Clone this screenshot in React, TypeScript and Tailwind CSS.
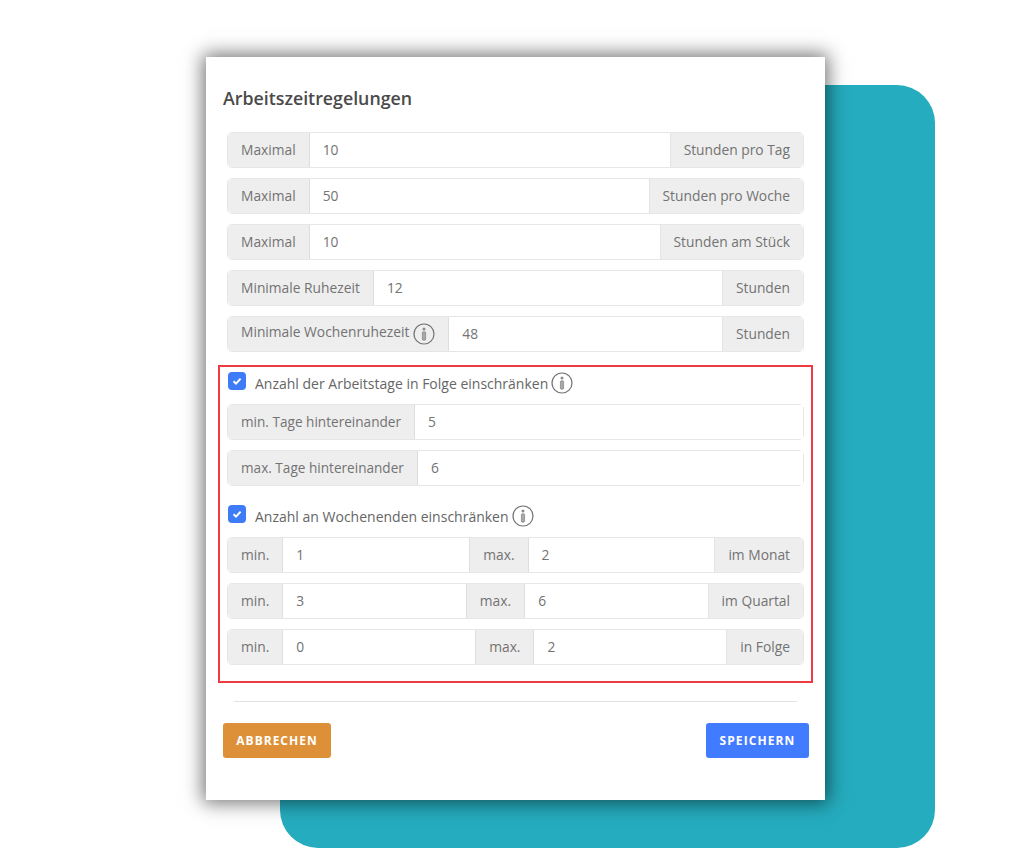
import React from 'react';

const InfoIcon = () => (
    <svg width="22" height="22" viewBox="0 0 22 22" fill="none" className="shrink-0">
        <circle cx="11" cy="11" r="10" stroke="#737373" strokeWidth="1.2" />
        <rect x="9.4" y="8.8" width="3.2" height="8.4" rx="1" fill="#a8a8a8" stroke="#737373" strokeWidth="0.6" />
        <circle cx="11" cy="5.9" r="1.5" fill="#8a8a8a" />
    </svg>
);

const Addon = ({ children, side }: { children: React.ReactNode; side: 'left' | 'mid' | 'right' }) => (
    <div
        className={
            'flex items-center gap-[4px] bg-[#eeeeee] px-[13px] text-[#737373] whitespace-nowrap ' +
            (side === 'left'
                ? 'rounded-l-[5px] border-r border-[#dedede]'
                : side === 'right'
                  ? 'rounded-r-[5px] border-l border-[#e4e4e4]'
                  : 'border-x border-[#dedede]')
        }
    >
        {children}
    </div>
);

const Field = ({ value }: { value: string }) => (
    <input
        readOnly
        value={value}
        className="min-w-0 flex-1 bg-white px-[13px] text-[#737373] outline-none"
    />
);

const Row = ({ children }: { children: React.ReactNode }) => (
    <div className="flex h-[36px] rounded-[5px] border border-[#e6e6e6] bg-white">{children}</div>
);

const CheckHead = ({ label }: { label: string }) => (
    <div className="flex h-[22px] items-start pl-[1px]">
        <span className="flex h-[18px] w-[18px] items-center justify-center rounded-[4px] bg-[#3d7bf7]">
            <svg width="12" height="12" viewBox="0 0 12 12" fill="none">
                <path d="M2.5 6.3 5 8.6 9.6 3.6" stroke="#fff" strokeWidth="2" />
            </svg>
        </span>
        <span className="ml-[9px] mr-[3px] mt-[2px] text-[14px] leading-[20px] text-[#666666]">{label}</span>
        <InfoIcon />
    </div>
);

const simpleRows = [
    { left: 'Maximal', value: '10', right: 'Stunden pro Tag' },
    { left: 'Maximal', value: '50', right: 'Stunden pro Woche' },
    { left: 'Maximal', value: '10', right: 'Stunden am Stück' },
    { left: 'Minimale Ruhezeit', value: '12', right: 'Stunden' },
];

const weekendRows = [
    { min: '1', max: '2', right: 'im Monat' },
    { min: '3', max: '6', right: 'im Quartal' },
    { min: '0', max: '2', right: 'in Folge' },
];

const App = () => {
    return (
        <div className="relative h-[858px] w-[1030px] overflow-hidden bg-white font-['Open_Sans',sans-serif] text-[13.8px]">
            {/* Teal backdrop */}
            <div className="absolute left-[280px] top-[85px] h-[763px] w-[655px] rounded-[38px] bg-[#25acbe]" />

            {/* Dialog */}
            <div className="absolute left-[206px] top-[57px] h-[743px] w-[619px] bg-white px-[17px] pt-[29px] shadow-[0_0_18px_3px_rgba(0,0,0,0.55)]">
                <h2 className="h-[24px] text-[17.8px] leading-[24px] font-semibold text-[#4a4a4a]">Arbeitszeitregelungen</h2>

                <div className="mt-[22px] flex flex-col gap-[10px] px-[4px]">
                    {simpleRows.map((row, index) => (
                        <Row key={index}>
                            <Addon side="left">{row.left}</Addon>
                            <Field value={row.value} />
                            <Addon side="right">{row.right}</Addon>
                        </Row>
                    ))}
                    <Row>
                        <Addon side="left">
                            <span className="mb-[3px]">Minimale Wochenruhezeit</span>
                            <InfoIcon />
                        </Addon>
                        <Field value="48" />
                        <Addon side="right">Stunden</Addon>
                    </Row>
                </div>

                {/* Red highlight */}
                <div className="-mx-[5px] mt-[13px] h-[318px] border-2 border-[#ee3b42] px-[7px] pt-[5px]">
                    <CheckHead label="Anzahl der Arbeitstage in Folge einschränken" />
                    <div className="mt-[10px] flex flex-col gap-[10px]">
                        <Row>
                            <Addon side="left"><span className="text-[13.6px]">min. Tage hintereinander</span></Addon>
                            <Field value="5" />
                        </Row>
                        <Row>
                            <Addon side="left"><span className="text-[13.6px]">max. Tage hintereinander</span></Addon>
                            <Field value="6" />
                        </Row>
                    </div>

                    <div className="mt-[19px]">
                        <CheckHead label="Anzahl an Wochenenden einschränken" />
                    </div>
                    <div className="mt-[10px] flex flex-col gap-[10px]">
                        {weekendRows.map((row, index) => (
                            <Row key={index}>
                                <Addon side="left">min.</Addon>
                                <Field value={row.min} />
                                <Addon side="mid">max.</Addon>
                                <Field value={row.max} />
                                <Addon side="right">{row.right}</Addon>
                            </Row>
                        ))}
                    </div>
                </div>

                <div className="mx-[11px] mt-[18px] h-[1px] bg-[#e2e2e2]" />

                <div className="mt-[21px] flex justify-between">
                    <button className="flex h-[35px] w-[108px] items-center justify-center rounded-[3px] bg-[#de9038] text-[12px] font-bold tracking-[1px] text-white">
                        ABBRECHEN
                    </button>
                    <button className="mr-[-1px] flex h-[35px] w-[103px] items-center justify-center rounded-[3px] bg-[#417bff] text-[12px] font-bold tracking-[1.1px] text-white">
                        SPEICHERN
                    </button>
                </div>
            </div>
        </div>
    );
};

export default App;
